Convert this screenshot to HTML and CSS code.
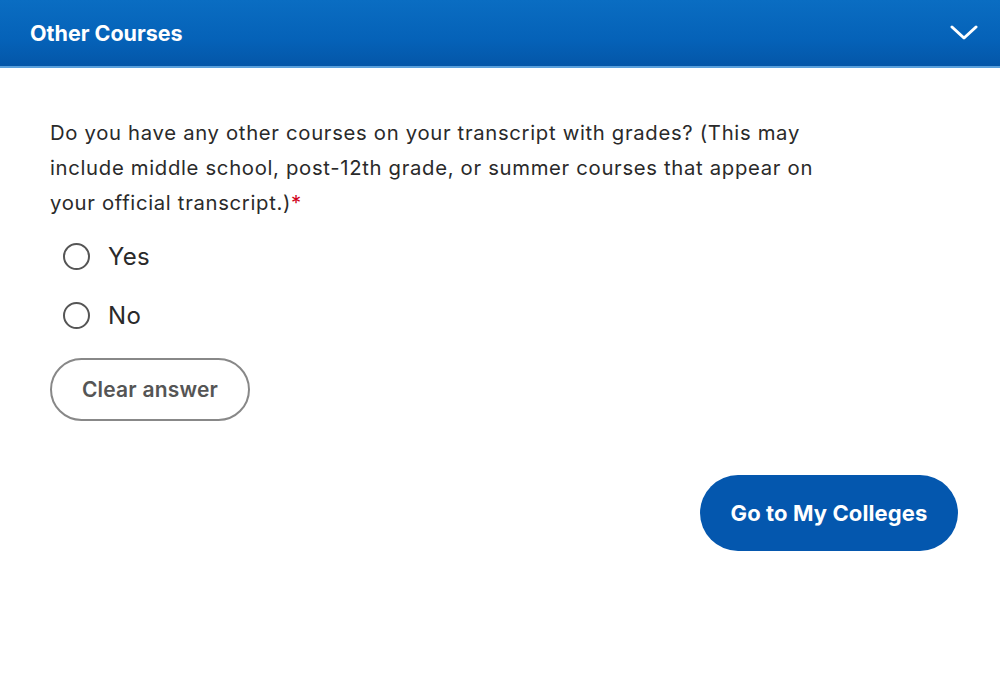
FILE: index.html
```html
<!DOCTYPE html>
<html>
<head>
<meta charset="utf-8">
<link rel="stylesheet" href="styles.css">
</head>
<body>
<div class="header">
  <h1 class="title">Other Courses</h1>
  <svg class="chevron" width="28" height="18" viewBox="0 0 28 18"><path d="M2 3 L14 14 L26 3" fill="none" stroke="#fff" stroke-width="3" stroke-linecap="round" stroke-linejoin="round"/></svg>
</div>
<div class="content">
  <p class="question">Do you have any other courses on your transcript with grades? (This may include middle school, post-12th grade, or summer courses that appear on your official transcript.)<span class="req">*</span></p>
  <div class="options">
    <label class="option"><span class="radio"></span><span class="opt-label">Yes</span></label>
    <label class="option"><span class="radio"></span><span class="opt-label">No</span></label>
  </div>
  <button class="clear">Clear answer</button>
  <div class="actions">
    <button class="primary">Go to My Colleges</button>
  </div>
</div>
</body>
</html>
```
FILE: styles.css
```css
html, body { margin: 0; padding: 0; background: #fff; }
body { font-family: "Inter", "Open Sans", sans-serif; color: #222; width: 1000px; }
.header {
  height: 68px;
  background: linear-gradient(180deg, #0a6dc2 0%, #0562b8 60%, #0456a8 100%);
  border-bottom: 2px solid #5aa0dc;
  display: flex; align-items: center; justify-content: space-between;
  padding: 0 22px 0 30px; box-sizing: border-box;
}
.title { margin: 0; color: #fff; font-size: 21.5px; font-weight: 700; letter-spacing: 0; }
.chevron { display: block; }
.content { padding: 47px 42px 0 50px; }
.question { margin: 0; font-size: 20.3px; line-height: 35px; width: 780px; color: #2a2a2a; letter-spacing: 0.68px; }
.req { color: #d0021b; }
.options { display: flex; flex-direction: column; gap: 23px; margin-top: 18px; padding-left: 13px; }
.option { display: flex; align-items: center; gap: 18px; height: 36px; }
.radio { width: 27px; height: 27px; border: 2.5px solid #555; border-radius: 50%; box-sizing: border-box; }
.opt-label { font-size: 24px; color: #2a2a2a; letter-spacing: 0.3px; }
.clear {
  margin-top: 25px; height: 63px; width: 200px; border: 2px solid #888; border-radius: 32px;
  background: #fff; font-family: inherit; font-size: 21px; font-weight: 600; color: #555; letter-spacing: 0.2px;
}
.actions { display: flex; justify-content: flex-end; margin-top: 54px; }
.primary {
  height: 76px; width: 258px; border: none; border-radius: 38px; background: #0457ae;
  color: #fff; font-family: inherit; font-size: 22px; font-weight: 700; letter-spacing: 0.1px;
}
```
